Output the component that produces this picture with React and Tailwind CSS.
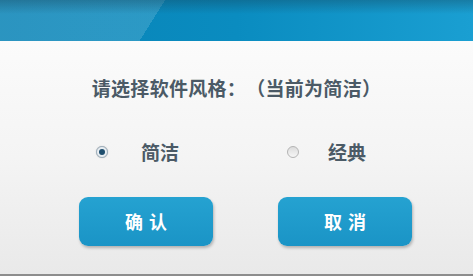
export default function App() {
  const font = { fontFamily: '"Noto Sans CJK SC", "Noto Sans", sans-serif' };

  return (
    <div className="w-[473px] h-[276px] flex flex-col overflow-hidden bg-[#f3f3f3]" style={font}>
      {/* Header bar */}
      <div className="h-[41px] shrink-0 bg-[linear-gradient(180deg,rgba(20,60,80,0.35)_0px,rgba(20,60,80,0)_14px),linear-gradient(122deg,rgba(255,255,255,0.14)_0px_140px,rgba(255,255,255,0)_140px),linear-gradient(90deg,#0883b6,#0a8cc0_50%,#1a9fd2)]" />

      {/* Body */}
      <div className="flex-1 flex flex-col bg-[linear-gradient(180deg,#fbfbfb,#f4f4f4_50%,#e9e9e9)] border-b-2 border-[#8d8d8d]">
        <p className="mt-[34px] h-[26px] text-center text-[19px] leading-[26px] font-bold text-[#4b5a66] tracking-[0.3px] [text-spacing-trim:space-all]">
          请选择软件风格：（当前为简洁）
        </p>

        <div className="mt-[36px] h-[30px] flex items-center">
          <label className="ml-[96px] flex items-center gap-[33px]">
            <span className="w-[12px] h-[12px] rounded-full border border-[#9fb0bd] bg-[#e9eef2] flex items-center justify-center shadow-[0_0_1px_rgba(0,0,0,0.3)]">
              <span className="w-[6px] h-[6px] rounded-full bg-[#1e4e6e]" />
            </span>
            <span className="text-[19px] font-bold text-[#4b5a66]">简洁</span>
          </label>
          <label className="ml-[108px] flex items-center gap-[29px]">
            <span className="w-[12px] h-[12px] rounded-full border border-[#b4b4b4] bg-[linear-gradient(180deg,#dcdcdc,#f6f6f6)]" />
            <span className="text-[19px] font-bold text-[#4b5a66]">经典</span>
          </label>
        </div>

        <div className="mt-[30px] flex pl-[79px] gap-[65px]">
          <button className="w-[134px] h-[49px] rounded-[9px] bg-[linear-gradient(180deg,#25a2d1,#1a94c6)] text-white text-[18px] font-bold tracking-[6px] pl-[6px] shadow-[1px_2px_3px_rgba(0,0,0,0.25)]">
            确认
          </button>
          <button className="w-[134px] h-[49px] rounded-[9px] bg-[linear-gradient(180deg,#25a2d1,#1a94c6)] text-white text-[18px] font-bold tracking-[6px] pl-[6px] shadow-[1px_2px_3px_rgba(0,0,0,0.25)]">
            取消
          </button>
        </div>
      </div>
    </div>
  );
}
